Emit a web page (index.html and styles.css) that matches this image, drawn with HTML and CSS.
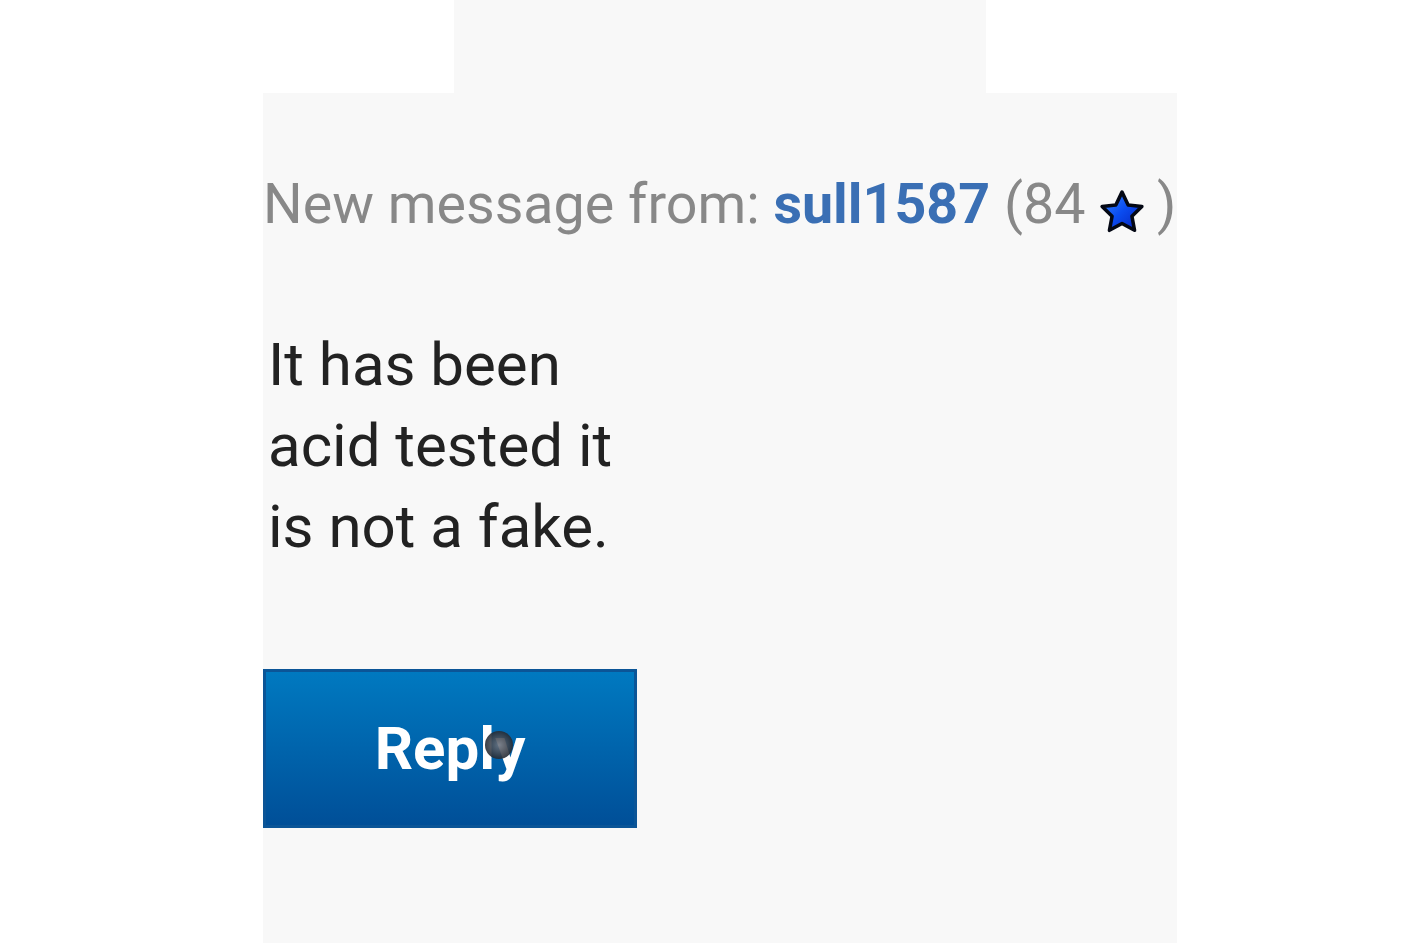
FILE: index.html
```html
<!DOCTYPE html>
<html lang="en">
<head>
    <meta charset="UTF-8">
    <meta name="viewport" content="width=device-width, initial-scale=1.0">
    <title>New Message</title>
    <link rel="stylesheet" href="styles.css">
</head>
<body>
    <div class="tab"></div>
    <div class="panel">
        <div class="header">
            New message from: <a class="user" href="#">sull1587</a>
            <span class="rating">(84 <svg class="star" viewBox="0 0 44 44" width="46" height="50">
                <defs>
                    <linearGradient id="starFill" x1="0" y1="0" x2="1" y2="1">
                        <stop offset="0" stop-color="#3a8cff"/>
                        <stop offset="0.5" stop-color="#0a4cf0"/>
                        <stop offset="1" stop-color="#0620b8"/>
                    </linearGradient>
                </defs>
                <path d="M22 3 L27.9 15.4 L41 16.8 L31.5 26.1 L34 39.5 L22 33 L10 39.5 L12.5 26.1 L3 16.8 L16.1 15.4 Z" fill="url(#starFill)" stroke="#040814" stroke-width="3.4" stroke-linejoin="round"/>
            </svg> )</span>
        </div>
        <div class="message">It has been acid tested it is not a fake.</div>
        <div class="actions">
            <button class="reply" type="button">Reply</button>
            <span class="touch"></span>
        </div>
    </div>
</body>
</html>
```

FILE: styles.css
```css
body {
    margin: 0;
    padding: 0;
    background-color: #fff;
    font-family: Roboto, "Liberation Sans", sans-serif;
}
.tab {
    width: 532px;
    height: 93px;
    margin-left: 454px;
    background-color: #f8f8f8;
}
.panel {
    width: 914px;
    height: 850px;
    margin-left: 263px;
    padding-top: 78px;
    box-sizing: border-box;
    background-color: #f8f8f8;
}
.header {
    font-size: 55.6px;
    line-height: 67px;
    color: #888;
    white-space: nowrap;
}
.user {
    color: #3a6fb4;
    font-weight: bold;
    text-decoration: none;
}
.star {
    vertical-align: -14px;
    margin-left: 0;
    margin-right: -2px;
}
.message {
    width: 374px;
    margin-top: 86px;
    padding-left: 5px;
    font-size: 60px;
    line-height: 81px;
    color: #222;
}
.actions {
    position: relative;
    margin-top: 102px;
    width: 374px;
}
.reply {
    display: block;
    width: 374px;
    height: 159px;
    padding: 0;
    border: 3px solid #0b5597;
    border-radius: 0;
    background: linear-gradient(#0079c0, #004f98);
    color: #fff;
    font-family: Roboto, "Liberation Sans", sans-serif;
    font-size: 60px;
    font-weight: bold;
    cursor: pointer;
}
.touch {
    position: absolute;
    left: 222px;
    top: 62px;
    width: 28px;
    height: 28px;
    border-radius: 50%;
    background: radial-gradient(#6d7480, #262b33 70%);
    opacity: 0.9;
}
```
